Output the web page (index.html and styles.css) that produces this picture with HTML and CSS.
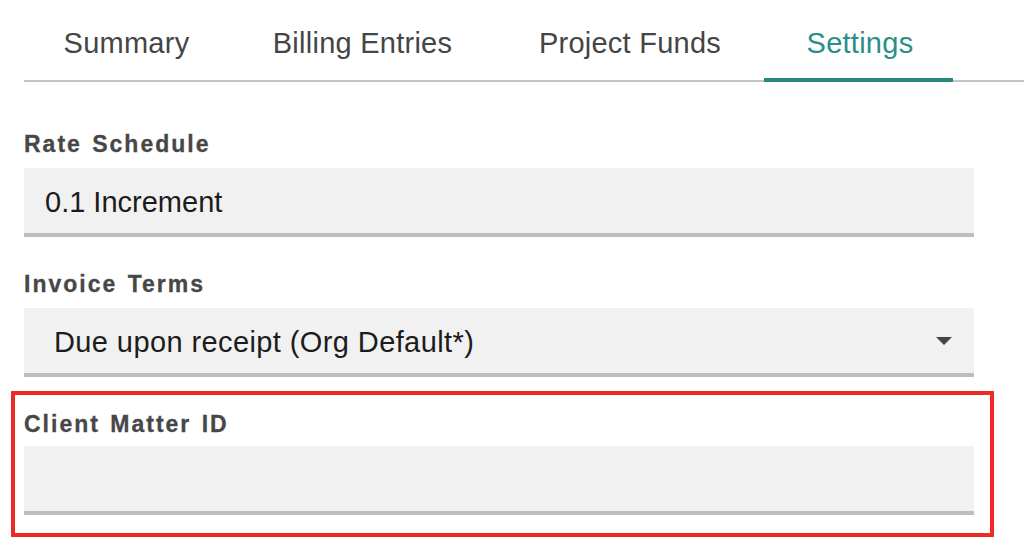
FILE: index.html
```html
<!DOCTYPE html>
<html lang="en">
<head>
<meta charset="utf-8">
<title>Settings</title>
<link rel="stylesheet" href="styles.css">
</head>
<body>
<div class="page">
  <nav class="tabs">
    <div class="tab tab-summary">Summary</div>
    <div class="tab tab-billing">Billing Entries</div>
    <div class="tab tab-funds">Project Funds</div>
    <div class="tab tab-settings active">Settings</div>
  </nav>
  <form class="form">
    <div class="field">
      <div class="label">Rate Schedule</div>
      <div class="box text-box">0.1 Increment</div>
    </div>
    <div class="field">
      <div class="label">Invoice Terms</div>
      <div class="box select-box">
        <span class="select-value">Due upon receipt (Org Default*)</span>
        <svg class="caret" width="16" height="8" viewBox="0 0 16 8"><path d="M0 0 L16 0 L8 8 Z" fill="#454545"/></svg>
      </div>
    </div>
    <div class="field highlight">
      <div class="label">Client Matter ID</div>
      <div class="box text-box"></div>
    </div>
  </form>
</div>
</body>
</html>
```

FILE: styles.css
```css
* { box-sizing: border-box; }
html, body { margin: 0; padding: 0; background: #fff; }
body {
  font-family: "Liberation Sans", Arial, sans-serif;
  width: 1024px;
  height: 560px;
  overflow: hidden;
}
.page {
  padding-left: 24px;
}
.tabs {
  display: flex;
  height: 82px;
  border-bottom: 2px solid #c4c4c4;
}
.tab {
  padding: 26px 0 0;
  font-size: 29px;
  line-height: 34px;
  letter-spacing: 0.25px;
  color: #454545;
  text-align: center;
  height: 82px;
}
.tab-summary { width: 205px; }
.tab-billing { width: 267px; }
.tab-funds { width: 268px; }
.tab-settings { width: 189px; }
.tab.active {
  color: #2a8f88;
  border-bottom: 4px solid #22897f;
  height: 82px;
  margin-bottom: -2px;
  padding-left: 3px;
}
.form {
  width: 950px;
  padding-top: 48px;
}
.field + .field { margin-top: 33px; }
.label {
  font-size: 23px;
  line-height: 28px;
  font-weight: bold;
  letter-spacing: 2px;
  word-spacing: 2px;
  color: #474747;
  -webkit-text-stroke: 0.3px #474747;
}
.box {
  margin-top: 10px;
  height: 69px;
  padding-top: 3px;
  background: #f1f1f1;
  border-bottom: 4px solid #bdbdbd;
  font-size: 29px;
  color: #1c1c1c;
  display: flex;
  align-items: center;
}
.text-box { padding-left: 21px; }
.select-box {
  padding: 3px 22px 0 30px;
  justify-content: space-between;
}
.select-value { letter-spacing: 0.4px; }
.caret { display: block; margin-top: -3px; }
.field.highlight {
  margin: 14px -20px 0 -13px;
  border: 4px solid #ee2a24;
  padding: 15px 16px 18px 9px;
}
.highlight .box { margin-top: 8px; }
```
